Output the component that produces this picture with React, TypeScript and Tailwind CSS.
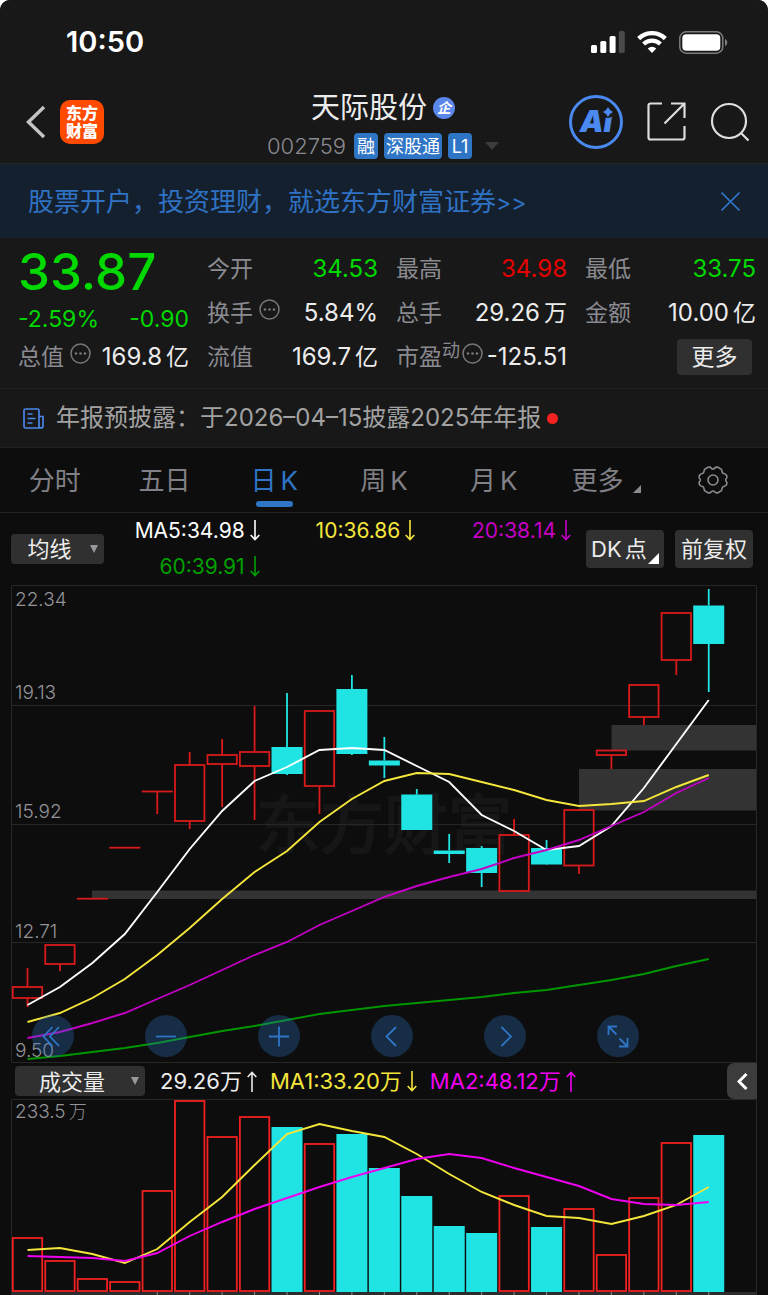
import type { ReactNode } from 'react';
import clsx from 'clsx';

const STEP = 32.44;
const cx = (i: number) => 27.5 + i * STEP;
const toPoints = (ys: number[]) => ys.map((y, i) => `${cx(i)},${y}`).join(' ');

// [top, bottom, high, low, falling]
type Candle = [number, number, number, number, boolean?];

const candles: Candle[] = [
  [987, 998, 968, 1007],
  [945, 964, 945, 971],
  [898.7, 898.7, 898.7, 898.7],
  [847.7, 847.7, 847.7, 847.7],
  [791.5, 791.5, 791.5, 814],
  [765, 821, 752, 829],
  [755, 764, 739, 807],
  [752, 766, 706, 820],
  [747, 774, 693, 775, true],
  [711, 786, 711, 814],
  [689, 754, 675, 755, true],
  [760.5, 765.5, 737, 778, true],
  [794.5, 830, 789, 830, true],
  [850.5, 854, 834, 863, true],
  [848, 873, 846, 887, true],
  [835, 891, 819, 891],
  [848, 864.5, 840, 865, true],
  [810, 865.5, 810, 874],
  [750.5, 755, 750.5, 769],
  [685, 717, 685, 725],
  [613, 660, 613, 675],
  [605.5, 644, 589, 692, true],
];

const ma5 = [1005, 987, 963, 934, 892, 849, 811, 781, 767, 750, 748, 750, 766, 782, 815, 831, 850, 846, 826, 788, 744, 700];
const ma10 = [1022, 1013, 998, 979, 955, 928, 899, 872, 851, 822, 799, 781, 773, 774, 782, 790, 800, 806, 804, 801, 787, 775];
const ma20 = [1038, 1032, 1023, 1013, 999, 985, 970, 955, 942, 925, 911, 897, 886, 877, 869, 858, 850, 840, 826, 812, 793, 778];
const ma60 = [1059, 1056, 1052, 1048, 1043, 1037, 1031, 1026, 1020, 1014, 1010, 1006, 1003, 1000, 997, 993, 990, 985, 980, 974, 966, 959];

const volumes = [1238, 1261, 1279, 1282, 1191, 1101, 1137, 1117, 1127, 1144, 1134, 1168, 1196, 1226, 1233, 1196, 1227, 1209, 1255, 1198, 1143, 1135];
const vol1 = [1250, 1248, 1254, 1263, 1249, 1222, 1197, 1165, 1134, 1124, 1131, 1137, 1154, 1174, 1192, 1205, 1216, 1218, 1224, 1216, 1205, 1187];
const vol2 = [1256, 1257, 1258, 1261, 1253, 1236, 1222, 1209, 1198, 1187, 1177, 1168, 1159, 1154, 1158, 1168, 1177, 1186, 1199, 1204, 1205, 1202];

const tabs = ['分时', '五日', '日K', '周K', '月K'];

function StatusBar() {
  return (
    <div className="flex h-20 items-center justify-between pl-[66px] pr-10 pt-1">
      <span className="text-[29px] font-semibold text-white">10:50</span>
      <div className="flex items-center gap-3">
        <svg width="34" height="22" viewBox="0 0 34 22" fill="#fff">
          <rect x="0" y="14" width="6" height="8" rx="1.5" />
          <rect x="9.3" y="10" width="6" height="12" rx="1.5" />
          <rect x="18.6" y="5" width="6" height="17" rx="1.5" />
          <rect x="27.8" y="0" width="6" height="22" rx="1.5" fill="#4a4a4a" />
        </svg>
        <svg width="30" height="22" viewBox="0 0 30 22" fill="none" stroke="#fff">
          <path d="M1.7 7.6a19 19 0 0 1 26.6 0" strokeWidth="4.4" />
          <path d="M6.6 13a12.2 12.2 0 0 1 16.8 0" strokeWidth="4.2" />
          <path d="M15 22l-4.3-4.6a6.2 6.2 0 0 1 8.6 0z" fill="#fff" stroke="none" />
        </svg>
        <svg width="49" height="23" viewBox="0 0 49 23" fill="none">
          <rect x="0.8" y="0.8" width="43" height="21.4" rx="6.5" stroke="#7d7d7d" strokeWidth="1.5" />
          <rect x="3.3" y="3.3" width="38" height="16.4" rx="4" fill="#fff" />
          <path d="M46 8c3 1 3 6 0 7z" fill="#7d7d7d" />
        </svg>
      </div>
    </div>
  );
}

function Tag({ children }: { children: ReactNode }) {
  return (
    <span className="flex h-[26px] min-w-6 items-center justify-center rounded-[4px] bg-[#2f75c6] px-0.5 text-[18px] text-white">
      {children}
    </span>
  );
}

function Header() {
  return (
    <header className="grid h-[84px] grid-cols-[1fr_auto_1fr] border-b border-[#262626] pl-4 pr-[18px]">
      <div className="flex items-center gap-3.5 pl-[10px]">
        <button type="button" aria-label="返回">
          <svg width="20" height="34" viewBox="0 0 20 34" fill="none" stroke="#c4c4c4" strokeWidth="3.4">
            <path d="M18 2 2.500 17 18 32" />
          </svg>
        </button>
        <a
          href="#home"
          className="flex size-11 flex-col items-center justify-center rounded-[10px] bg-[#ff4a00] text-[16px] font-black leading-[18px] text-white"
        >
          <span>东方</span>
          <span>财富</span>
        </a>
      </div>

      <div className="flex flex-col items-center">
        <h1 className="flex h-[53px] items-center gap-1.5 pt-0.5 text-[29px] text-[#ececec]">
          天际股份
          <span className="flex size-[22px] items-center justify-center rounded-full bg-[#5b86ea] text-[14px] font-bold italic text-white">
            企
          </span>
        </h1>
        <div className="flex h-[26px] items-center gap-1.5">
          <span className="mr-0.5 text-[22px] font-light text-[#8a8a90]">002759</span>
          <Tag>融</Tag>
          <Tag>深股通</Tag>
          <Tag>L1</Tag>
          <svg className="ml-[7px]" width="14" height="8" viewBox="0 0 14 8" fill="#3c3c3e">
            <path d="M0 0h14L7 8z" />
          </svg>
        </div>
      </div>

      <div className="flex items-center justify-end gap-6">
        <button
          type="button"
          className="relative flex size-[54px] items-center justify-center rounded-full border-[3px] border-[#4a8af0] text-[30px] font-black italic text-[#4a8af0]"
        >
          Ai
          <svg className="absolute right-1.5 top-2" width="12" height="12" viewBox="0 0 12 12">
            <circle cx="6" cy="6" r="6" fill="#181818" />
            <path d="M6 1Q7.500 4.500 11 6 7.500 7.500 6 11 4.500 7.500 1 6 4.500 4.500 6 1z" fill="#4a8af0" />
          </svg>
        </button>
        <button type="button" aria-label="分享">
          <svg width="39" height="39" viewBox="0 0 39 39" fill="none" stroke="#dedede" strokeWidth="2.2">
            <path d="M15 1.500H3.500a2 2 0 0 0-2 2v32a2 2 0 0 0 2 2h32a2 2 0 0 0 2-2V24" />
            <path d="M24 1.500h13.500V16M37 2 17.500 21.500" />
          </svg>
        </button>
        <button type="button" aria-label="搜索">
          <svg width="40" height="40" viewBox="0 0 40 40" fill="none" stroke="#dedede" strokeWidth="2.2">
            <circle cx="19" cy="19" r="17" />
            <path d="M31.500 31.500 38.500 38.500" />
          </svg>
        </button>
      </div>
    </header>
  );
}

function Banner() {
  return (
    <div className="flex h-[74px] items-center justify-between bg-[#15202e] pl-7 pr-7">
      <a href="#open" className="text-[26px] text-[#2f72c4]">
        股票开户，投资理财，就选东方财富证券<span className="text-[23px]">&gt;&gt;</span>
      </a>
      <button type="button" aria-label="关闭">
        <svg width="19" height="19" viewBox="0 0 19 19" stroke="#2f72c4" strokeWidth="1.6">
          <path d="M.5.5l18 18M18.500.5l-18 18" />
        </svg>
      </button>
    </div>
  );
}

function Dots() {
  return (
    <svg width="21" height="21" viewBox="0 0 21 21" fill="#77777b">
      <circle cx="10.5" cy="10.5" r="9.5" fill="none" stroke="#77777b" strokeWidth="1.5" />
      <circle cx="6" cy="10.5" r="1.3" />
      <circle cx="10.5" cy="10.5" r="1.3" />
      <circle cx="15" cy="10.5" r="1.3" />
    </svg>
  );
}

function Stat({ label, value, unit, sup, info, color = 'text-[#ececec]' }: {
  label: string;
  value: string;
  unit?: string;
  sup?: string;
  info?: boolean;
  color?: string;
}) {
  return (
    <div className="flex h-11 items-center justify-between whitespace-nowrap">
      <dt className="flex items-center text-[23px] text-[#8a8a90]">
        {label}
        {sup && <span className="mb-3 text-[18px] leading-5">{sup}</span>}
        {info && <span className={clsx('mb-2', sup ? 'ml-0.5' : 'ml-1.5')}><Dots /></span>}
      </dt>
      <dd className={clsx('flex items-center gap-1 text-[24px]', color)}>
        {value}
        {unit && <span className="text-[23px]">{unit}</span>}
      </dd>
    </div>
  );
}

function Quotes() {
  return (
    <section className="grid grid-cols-4 gap-x-[18px] pb-[9px] pl-[18px] pr-3 pt-[9px]">
      <div>
        <div className="flex h-14 items-center pb-1.5 text-[51px] font-medium text-[#00d800]">33.87</div>
        <div className="flex h-8 items-center justify-between text-[23px] text-[#00d800]">
          <span>-2.59%</span>
          <span>-0.90</span>
        </div>
        <dl><Stat label="总值" value="169.8" unit="亿" info /></dl>
      </div>
      <dl>
        <Stat label="今开" value="34.53" color="text-[#00d800]" />
        <Stat label="换手" value="5.84%" info />
        <Stat label="流值" value="169.7" unit="亿" />
      </dl>
      <dl>
        <Stat label="最高" value="34.98" color="text-[#e60000]" />
        <Stat label="总手" value="29.26" unit="万" />
        <Stat label="市盈" value="-125.51" sup="动" info />
      </dl>
      <div>
        <dl>
          <Stat label="最低" value="33.75" color="text-[#00d800]" />
          <Stat label="金额" value="10.00" unit="亿" />
        </dl>
        <div className="flex h-11 items-center justify-end pr-1">
          <button type="button" className="h-9 w-[75px] rounded-[4px] bg-[#303030] text-[23px] text-[#ececec]">
            更多
          </button>
        </div>
      </div>
    </section>
  );
}

function News() {
  return (
    <a
      href="#news"
      className="flex h-[60px] items-center border-y border-[#222222] pl-[23px] text-[24px] text-[#a2a2a2]"
    >
      <svg className="mr-3" width="21" height="21" viewBox="0 0 21 21" fill="none" stroke="#4a86e8" strokeWidth="1.7">
        <path d="M16 20H2.500A1.500 1.500 0 0 1 1 18.500V2.500A1.500 1.500 0 0 1 2.500 1h12A1.500 1.500 0 0 1 16 2.500V18a2 2 0 0 0 4 0V8.500h-4M4.500 6h5M4.500 10.500h8M4.500 15h5" />
      </svg>
      年报预披露：于2026–04–15披露2025年年报
      <span className="ml-1.5 size-[11px] rounded-full bg-[#f52222]" />
    </a>
  );
}

function Tabs() {
  return (
    <nav className="grid h-[65px] grid-cols-7 border-b border-[#222222] text-[26px] text-[#808086]">
      {tabs.map((tab) => {
        const active = tab === '日K';
        return (
          <button
            key={tab}
            type="button"
            className={clsx('relative flex items-center justify-center gap-1', active && 'text-[#2f75c6]')}
          >
            {tab.endsWith('K') ? <><span>{tab[0]}</span><span>K</span></> : tab}
            {active && <span className="absolute bottom-[5px] h-1.5 w-[37px] rounded-full bg-[#2f75c6]" />}
          </button>
        );
      })}
      <button type="button" className="flex items-center justify-center gap-[10px] pl-1.5">
        更多
        <svg className="mt-[18px]" width="8" height="8" viewBox="0 0 8 8" fill="#8a8a90">
          <path d="M8 0v8H0z" />
        </svg>
      </button>
      <button type="button" aria-label="设置" className="flex items-center justify-center">
        <svg width="30" height="28" viewBox="0 0 30 28" fill="none" stroke="#8a8a90" strokeWidth="1.6" strokeLinejoin="round">
          <path d="M10 1.300Q12.400.7 13.200 2.100 15 4 16.800 2.100 17.600.7 20 1.300L23.500 3.400Q24 5.600 24.600 7 27 7.600 28.300 9 29.200 10.500 28.700 12 26.500 14 28.700 16 29.200 17.500 28.300 19 27 20.400 24.600 21 24 22.400 23.500 24.600L20 26.700Q17.600 27.300 16.800 25.900 15 24 13.200 25.900 12.400 27.300 10 26.700L6.500 24.600Q6 22.400 5.400 21 3 20.400 1.700 19 .8 17.500 1.300 16 3.500 14 1.300 12 .8 10.500 1.700 9 3 7.600 5.400 7 6 5.600 6.500 3.400z" />
          <circle cx="15" cy="14" r="5" />
        </svg>
      </button>
    </nav>
  );
}

function Arrow({ up }: { up?: boolean }) {
  return (
    <svg
      role="img"
      aria-label={up ? '↑' : '↓'}
      className="ml-[5px] inline-block align-[-3px]"
      width="10"
      height="21"
      viewBox="0 0 10 21"
      fill="none"
      stroke="currentColor"
      strokeWidth="1.6"
    >
      <path d={up ? 'M5 21V1.500M.7 6 5 1.500 9.300 6' : 'M5 0v19.500M.7 15 5 19.500 9.300 15'} />
    </svg>
  );
}

function Picker({ label, options, className }: { label: string; options: string[]; className: string }) {
  return (
    <div className={clsx('relative h-[30px] shrink-0 rounded-[4px] bg-[#303030]', className)}>
      <select
        aria-label={label}
        className="size-full appearance-none pr-4 text-center text-[22px] leading-[30px] text-[#ececec] outline-none [text-align-last:center]"
      >
        {options.map((o) => <option key={o}>{o}</option>)}
      </select>
      <svg className="pointer-events-none absolute right-1.5 top-[11px]" width="8" height="8" viewBox="0 0 8 8" fill="#98989c">
        <path d="M0 0h8L4 8z" />
      </svg>
    </div>
  );
}

function Averages() {
  return (
    <div className="flex h-[72px] items-start pl-[11px] pr-[15px]">
      <Picker label="指标" options={['均线', 'BOLL']} className="mt-[21px] w-[93px]" />
      <div className="grid w-[467px] grid-cols-3 whitespace-nowrap text-right text-[21px] leading-9">
        <span className="text-white">MA5:34.98<Arrow /></span>
        <span className="text-[#f5e63c]">10:36.86<Arrow /></span>
        <span className="text-[#c400c4]">20:38.14<Arrow /></span>
        <span className="text-[#00a000]">60:39.91<Arrow /></span>
      </div>
      <div className="ml-auto mt-[17px] flex gap-[11px] text-[22px] text-[#ececec]">
        <button type="button" className="relative flex h-[38px] w-[78px] items-center gap-[3px] rounded-[4px] bg-[#303030] pl-[5px]">
          <span>DK</span><span>点</span>
          <svg className="absolute bottom-1 right-[5px]" width="11" height="11" viewBox="0 0 11 11" fill="#fff">
            <path d="M11 0v11H0z" />
          </svg>
        </button>
        <button type="button" className="h-[38px] w-[78px] rounded-[4px] bg-[#303030]">
          前复权
        </button>
      </div>
    </div>
  );
}

const controls: { label: string; d: string }[] = [
  { label: '最早', d: 'M20.500 12 11.500 21.500l9 9.500M27 12l-9 9.500L27 31' },
  { label: '缩小', d: 'M11 21.500h20' },
  { label: '放大', d: 'M11 21.500h20M21 11.500v20' },
  { label: '左移', d: 'M25 12l-9.500 9.500L25 31' },
  { label: '右移', d: 'M17.500 12l9.500 9.500L17.500 31' },
  { label: '全屏', d: 'M11.500 20v-8.500h8.500M12 12l7.500 7.500M30.500 23v8.500H22M30 31l-7.500-7.500' },
];

function PriceChart() {
  return (
    <div className="relative mx-[11px]">
      <div className="pointer-events-none absolute inset-0 flex items-center justify-center pt-1.5 font-serif text-[64px] font-black text-[#161616]">
        东方财富
      </div>
      <svg className="relative block w-full" viewBox="11 585 746 478" fill="none">
        <path d="M11.500 585.500h745v477h-745zM11 705.500h746M11 824.500h746M11 942.500h746" stroke="#262626" />
        <path d="M92 890.500h664v8.500H92zM579 769h177v41.500H579zM611.500 725h144.500v25.500H611.500z" fill="#333333" />
        {candles.map(([top, bottom, high, low, falling], i) => {
          const x = cx(i);
          const color = falling ? '#20e4e4' : '#d81a1a';
          return (
            <g key={i} stroke={color} strokeWidth="1.800">
              <path d={`M${x} ${high}V${top}M${x} ${bottom}V${low}`} />
              {top === bottom ? (
                <path d={`M${x - 15.5} ${top}h31`} />
              ) : falling ? (
                <rect x={x - 15.5} y={top} width="31" height={bottom - top} fill={color} stroke="none" />
              ) : (
                <rect x={x - 14.7} y={top} width="29.400" height={bottom - top} />
              )}
            </g>
          );
        })}
        <g strokeWidth="1.900">
          <polyline points={toPoints(ma60)} stroke="#009600" />
          <polyline points={toPoints(ma5)} stroke="#ffffff" />
          <polyline points={toPoints(ma10)} stroke="#f5e63c" />
          <polyline points={toPoints(ma20)} stroke="#c400c4" />
        </g>
      </svg>

      <div className="absolute -bottom-0.5 left-1 top-px flex flex-col text-[19px] font-light leading-7 text-[#939398]">
        <span>22.34</span>
        <div className="flex flex-1 flex-col justify-between pt-[65px]">
          <span>19.13</span>
          <span>15.92</span>
          <span>12.71</span>
          <span>9.50</span>
        </div>
      </div>

      <div className="absolute bottom-1.5 left-[21px] flex gap-[71px]">
        {controls.map(({ label, d }) => (
          <button key={label} type="button" aria-label={label} className="size-[42px] rounded-full bg-[#2f75c6]/30">
            <svg width="42" height="42" viewBox="0 0 42 42" fill="none" stroke="#2f75c6" strokeWidth="1.800">
              <path d={d} />
            </svg>
          </button>
        ))}
      </div>
    </div>
  );
}

function VolumeBar() {
  return (
    <div className="mx-[11px] flex h-9 items-center whitespace-nowrap pl-1 text-[22px]">
      <Picker label="副图指标" options={['成交量', 'MACD']} className="w-[130px]" />
      <span className="ml-[15px] text-[#ececec]">29.26万<Arrow up /></span>
      <span className="ml-[13px] text-[#f5e63c]">MA1:33.20万<Arrow /></span>
      <span className="ml-[13px] text-[#f000f0]">MA2:48.12万<Arrow up /></span>
      <button type="button" aria-label="展开" className="ml-auto flex h-9 w-[30px] items-center justify-center rounded-l-[7px] bg-[#3c3c3c]">
        <svg width="11" height="17" viewBox="0 0 11 17" fill="none" stroke="#fff" strokeWidth="3">
          <path d="M9.500 1 2 8.500 9.500 16" />
        </svg>
      </button>
    </div>
  );
}

function VolumeChart() {
  return (
    <div className="relative mx-[11px]">
      <svg className="block w-full" viewBox="11 1099 746 196" fill="none">
        <path d="M11.500 1295V1099.500h745V1295" stroke="#262626" />
        <path d="M11 1292h746v3H11z" fill="#2c2c2e" />
        {volumes.map((y, i) => {
          const x = cx(i);
          return candles[i][4] ? (
            <rect key={i} x={x - 15.5} y={y} width="31" height={1292 - y} fill="#20e4e4" />
          ) : (
            <rect key={i} x={x - 14.7} y={y} width="29.400" height={1291 - y} stroke="#f02020" strokeWidth="1.800" />
          );
        })}
        {volumes.slice(4).map((_, i) => (
          <path key={i} d={`M${cx(i + 4)} 1292v3`} stroke="#8a8a90" />
        ))}
        <g strokeWidth="1.900">
          <polyline points={toPoints(vol1)} stroke="#f5e63c" />
          <polyline points={toPoints(vol2)} stroke="#f000f0" />
        </g>
      </svg>
      <div className="absolute left-1 top-0 flex gap-[3px] text-[19px] font-light leading-[26px] text-[#939398]">
        <span>233.5</span><span className="text-[18px]">万</span>
      </div>
    </div>
  );
}

export default function App() {
  return (
    <div className="bg-white font-['Inter','Noto_Sans_CJK_SC',sans-serif]" lang="zh-CN">
      <div className="overflow-hidden rounded-t-[10px] bg-[#0d0d0d]">
        <div className="bg-[#181818]">
          <StatusBar />
          <Header />
          <Banner />
          <Quotes />
          <News />
        </div>
        <Tabs />
        <Averages />
        <PriceChart />
        <VolumeBar />
        <VolumeChart />
      </div>
    </div>
  );
}
